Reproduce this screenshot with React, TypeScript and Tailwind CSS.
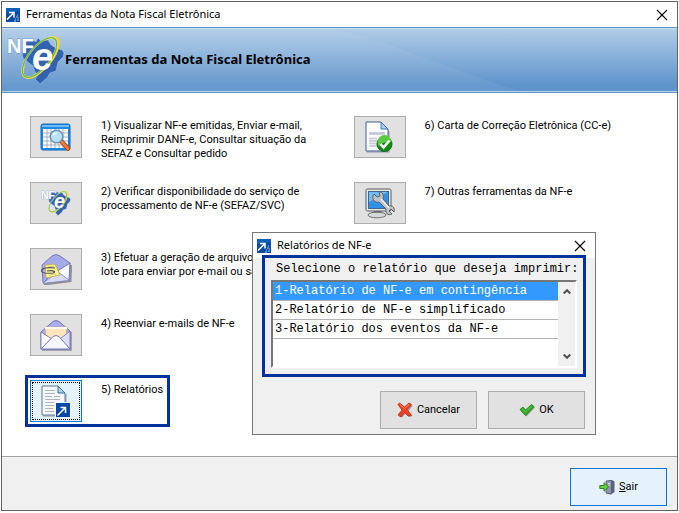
import { useState } from 'react'
import type { ReactNode } from 'react'

const REPORTS = [
  '1-Relatório de NF-e em contingência',
  '2-Relatório de NF-e simplificado',
  '3-Relatório dos eventos da NF-e',
]

function AppIcon() {
  return (
    <svg className="w-3.5 h-3.5 shrink-0" viewBox="0 0 14 14" aria-hidden="true">
      <rect width="14" height="14" fill="#0b4da2" />
      <path d="M0 0H14V3L0 5Z" fill="#0f5fb8" />
      <path d="M1 11.5L7 5.5M3 4.5H8V9.5" stroke="#fff" strokeWidth="1.5" fill="none" />
      <path d="M9 11h1M10 9h2M11 7h1M11 12h2M8 13h2M12 10h1" stroke="#a9c9ec" strokeWidth="1.2" />
    </svg>
  )
}

function CloseIcon() {
  return (
    <svg className="w-3 h-3" viewBox="0 0 12 12" aria-hidden="true">
      <path d="M1 1L11 11M11 1L1 11" stroke="#000" strokeWidth="1.1" fill="none" />
    </svg>
  )
}

function NfeLogo({ className }: { className: string }) {
  return (
    <svg className={className} viewBox="0 0 58 50" aria-hidden="true">
      <path
        d="M18 6L24 4L29 7L31 3L34 6L41 5L44 10L49 13L55 15L57 18L56 22L51 27L49 36L43 38L40 43L33 49L28 44L31 40L28 37L26 31L22 28L16 23L15 17L19 14Z"
        fill="#3363b0"
        stroke="#a5c6e8"
        strokeOpacity=".5"
        strokeWidth="1"
        strokeLinejoin="round"
      />
      <text
        x="0"
        y="18"
        fontFamily="Liberation Sans, sans-serif"
        fontWeight="700"
        fontSize="20"
        fill="#fff"
        stroke="#6f9bd0"
        strokeWidth="1"
        paintOrder="stroke"
      >
        NF
      </text>
      <g fill="none">
        <path d="M41 3C48 1 53 3 52 9C51 15 47 23 42 29" stroke="#f5d626" strokeWidth="2" />
        <path d="M17 31C14 38 16 43 21 43C26 43 32 39 37 34" stroke="#f5d626" strokeWidth="2" />
        <ellipse cx="32.5" cy="22.5" rx="10.5" ry="24" transform="rotate(39 32.5 22.5)" stroke="#eef7e0" strokeOpacity=".7" strokeWidth="2.2" />
        <ellipse cx="32.5" cy="22.5" rx="10.5" ry="24" transform="rotate(39 32.5 22.5)" stroke="#78b82f" strokeWidth="1.4" />
      </g>
      <text x="25" y="35" fontFamily="Liberation Sans, sans-serif" fontStyle="italic" fontWeight="700" fontSize="38" fill="#fff">
        e
      </text>
    </svg>
  )
}

function TableSearchIcon() {
  return (
    <svg className="w-8 h-7" viewBox="0 0 32 28" aria-hidden="true">
      <rect x="1" y="1" width="29" height="26" rx="2" fill="#1d8be6" stroke="#1168bd" />
      <rect x="2" y="2" width="27" height="2" fill="#6fbcf7" />
      <rect x="3" y="6" width="25" height="19" fill="#fff" />
      <path d="M7 6V25M11 6V25M15 6V25M19 6V25M23 6V25M3 10H28M3 14H28M3 18H28M3 22H28" stroke="#a4adbf" />
      <path d="M22 19L28 25.5" stroke="#a13c12" strokeWidth="4.5" strokeLinecap="round" />
      <path d="M22 19L28 25.5" stroke="#f47a3a" strokeWidth="3" strokeLinecap="round" />
      <circle cx="16.5" cy="13.5" r="6.3" fill="#b5e2f8" stroke="#6f93b2" strokeWidth="1.5" />
      <path d="M12.5 13C13 10 15 9 18 9.5C16 11 14 12 12.5 13Z" fill="#fff" />
    </svg>
  )
}

function EnvelopeIcon({ note }: { note?: boolean }) {
  return (
    <svg className="w-8 h-8" viewBox="0 0 32 32" aria-hidden="true">
      {note ? (
        <>
          <path d="M4 31.5L30.5 28L31 12" fill="none" stroke="#8f8f99" strokeWidth="2" />
          <path d="M2 12L12 3Q16 0 20 3L30 10L29 27L3 30Z" fill="#a6aaea" stroke="#7679b8" />
          <path d="M30 10L29 27L3 30L9 24L19 17Z" fill="#f8f8ff" stroke="#7679b8" />
          <path d="M3 30L18 19L29 27" fill="#d8daf8" stroke="#7679b8" strokeWidth=".8" />
          <path d="M5 12L15 11L20 22L6 25Z" fill="#fbf590" stroke="#b5aa4d" strokeWidth=".8" />
          <path d="M8 14L14 13M9 22L16 21" stroke="#d6cf70" />
          <path d="M15 15C8 14 1.5 15 1.5 18C2 20.500 8 20.500 13 20C16 19 15 17 7 18" fill="none" stroke="#505059" strokeWidth="1.2" />
        </>
      ) : (
        <>
          <path d="M2 31H31V13" fill="none" stroke="#8f8f99" strokeWidth="1.5" />
          <path d="M1 13L13 2.5Q16 .5 19 2.5L30 12V30H1Z" fill="#a9adeb" stroke="#7578b7" />
          <path d="M5 8L27 8L26 20L16 23L6 19Z" fill="#ffe5bd" stroke="#c7a98a" strokeWidth=".7" />
          <path d="M5 8H27V10H5Z" fill="#fffaf0" />
          <path d="M1 13L12 20L1 30Z" fill="#fbfbff" stroke="#7578b7" strokeWidth=".9" />
          <path d="M30 12L20 20L30 30Z" fill="#dcdef9" stroke="#7578b7" strokeWidth=".9" />
          <path d="M1 30L13 17.5Q16 15.5 19 17.5L30 30Z" fill="#f7f7ff" stroke="#7578b7" />
        </>
      )}
    </svg>
  )
}

function ReportIcon() {
  return (
    <svg className="w-8 h-8" viewBox="0 0 32 32" aria-hidden="true">
      <path d="M3 31H26V9" fill="none" stroke="#b8c3cc" strokeWidth="2" />
      <path d="M2 1H18L25 8V30H2Z" fill="#f5f7f8" stroke="#5c7695" />
      <path d="M18 1V8H25Z" fill="#a9d2f3" stroke="#3f6e9f" />
      <path d="M5 5.5h10M5 8.5h10M5 11.5h7M14 11.5h6M5 14.5h15M5 17.5h9M5 20.5h9M5 23.5h8M5 26.5h9" stroke="#b1b4b6" />
      <rect x="15" y="17" width="16" height="15" fill="#fff" />
      <rect x="16" y="18" width="14" height="14" fill="#0747a6" />
      <path d="M17.5 30.5L25 23M20.5 22.5H25.5V28" stroke="#fff" strokeWidth="1.5" fill="none" />
    </svg>
  )
}

function CheckedPageIcon() {
  return (
    <svg className="w-8 h-8" viewBox="0 0 32 32" aria-hidden="true">
      <path d="M3 31H25V10" fill="none" stroke="#a9adb6" strokeWidth="1.5" />
      <path d="M2 1H17L24 8V30H2Z" fill="#fdfdff" stroke="#405f91" />
      <path d="M17 1V8H24Z" fill="#a6cdf2" stroke="#3e77b9" />
      <rect x="5" y="11" width="16" height="3" fill="#c8cbdc" />
      <path d="M5 17.5H13M5 20H13M5 22.5H13M5 25H13" stroke="#cfd1df" strokeWidth="1.8" />
      <circle cx="20.5" cy="23" r="7.5" fill="#138b13" stroke="#0b6f0b" />
      <path d="M13.5 21A7 7 0 0 1 27.5 21Q21 20 14 25Z" fill="#5cca45" />
      <path d="M16.5 23L19.5 26.5L25.5 19.5" fill="none" stroke="#fff" strokeWidth="2.6" />
    </svg>
  )
}

function MonitorToolsIcon() {
  return (
    <svg className="w-8 h-8" viewBox="0 0 32 32" aria-hidden="true">
      <path d="M10 24H17L19 28H7Z" fill="#777e84" />
      <ellipse cx="13" cy="28" rx="9" ry="2.8" fill="#d5d8da" stroke="#666" strokeWidth=".9" />
      <rect x="2" y="2" width="25" height="22" rx="1.5" fill="#e6e8ea" stroke="#565d64" />
      <rect x="4.5" y="4.5" width="20" height="17" fill="#2f91e8" stroke="#456688" />
      <path d="M5 5H24L5 15Z" fill="#72bdf7" />
      <path
        d="M10 7L13 10L16 9L15 5C19 5 20 8 19 12L25 19C29 18 31 21 30 25L27 22L25 24L28 27C24 29 21 26 22 22L15 15C11 16 8 13 9 9Z"
        fill="#c0c3c6"
        stroke="#5c6064"
        strokeWidth="1"
      />
      <path d="M17 12L25 21" stroke="#f4f4f4" strokeWidth="1.3" />
    </svg>
  )
}

function CancelIcon() {
  return (
    <svg className="w-4 h-4" viewBox="0 0 16 16" aria-hidden="true">
      <path d="M4 2L9 6L13 2L15.5 4L11.5 9L15.5 14L12 15L8.5 11.5L5 15.5L2 14L6 9L2 4Z" fill="#999" />
      <path
        d="M2.5 1L7.5 5L12 1L14.5 2.5L10 7.5L14.5 13.5L11 14L7.5 10.5L4 15L1 13L5 8L1 2.5Z"
        fill="#f1401f"
        stroke="#b92c14"
        strokeWidth=".8"
        strokeLinejoin="round"
      />
      <path d="M3 2.5L7.5 6.5L12 2.5" fill="none" stroke="#ff9270" />
    </svg>
  )
}

function OkIcon() {
  return (
    <svg className="w-4 h-4" viewBox="0 0 16 16" aria-hidden="true">
      <path d="M2 9L5 7L7.5 10L13.5 4L16 5.5L7.5 14.5Z" fill="#999" />
      <path
        d="M1 7.5L4 5L6.5 8L12.5 2.5L15 4.5L6.5 13.5Z"
        fill="#35ad2b"
        stroke="#1b7d16"
        strokeWidth=".8"
        strokeLinejoin="round"
      />
      <path d="M3 7L6.5 10L12.5 4" fill="none" stroke="#66c957" strokeWidth=".8" />
    </svg>
  )
}

function ExitIcon() {
  return (
    <svg className="w-4 h-4" viewBox="0 0 16 16" aria-hidden="true">
      <path d="M7 2L13 1L15.5 2.5V13L12 15.5L7 14Z" fill="#5d5f7d" />
      <path d="M7 2L12.5 1.5V15L7 14Z" fill="#9194b4" stroke="#55576f" strokeWidth=".8" />
      <path d="M9 4.5H11M9 6H11" stroke="#d8daea" strokeWidth=".9" />
      <path d="M.8 6.5H5V3.8L9.5 8L5 12.2V9.5H.8Z" fill="#5fd23f" stroke="#237d16" strokeWidth=".9" />
    </svg>
  )
}

type ToolProps = { icon: ReactNode; text: string; active?: boolean }

function Tool({ icon, text, active }: ToolProps) {
  return (
    <label className={`flex items-start h-[42px] gap-[19px] ${active ? 'w-fit pr-0.5 outline-3 outline-offset-2 outline-[#003399]' : ''}`}>
      <button
        className={`flex items-center justify-center w-[52px] h-[42px] shrink-0 border ${
          active ? 'bg-[#e5f1fb] border-[#0078d7] p-px' : 'bg-[#e1e1e1] border-[#adadad]'
        }`}
      >
        {active ? (
          <span className="flex items-center justify-center w-full h-full border border-dotted border-black">{icon}</span>
        ) : (
          icon
        )}
      </button>
      <span className="pt-[3px] whitespace-pre leading-[14px]">{text}</span>
    </label>
  )
}

function TitleBar({ title }: { title: string }) {
  return (
    <div className="flex items-center h-[25px] shrink-0 bg-white pl-1 pr-[9px] gap-1.5 font-['Noto_Sans',sans-serif] text-[11px]">
      <AppIcon />
      <span className="flex-1 whitespace-nowrap">{title}</span>
      <button aria-label="Fechar">
        <CloseIcon />
      </button>
    </div>
  )
}

function ReportDialog() {
  const [selected, setSelected] = useState(0)

  return (
    <section className="absolute left-[252px] top-[232px] w-[344px] border border-[#777] bg-[#f0f0f0]">
      <TitleBar title="Relatórios de NF-e" />
      <div className="relative -mt-[3px] mx-[9px] border-3 border-[#003399] bg-[#f0f0f0] px-1.5 pb-1.5 font-['Liberation_Mono',monospace] text-[12px]">
        <p className="h-[22px] leading-[22px] pl-[5px] whitespace-nowrap">Selecione o relatório que deseja imprimir:</p>
        <div className="flex h-[88px] bg-white border-2 border-t-[#777] border-l-[#777] border-r-white border-b-white">
          <ul className="flex-1">
            {REPORTS.map((report, i) => (
              <li key={report} className="border-b border-[#b4b4b4]">
                <button
                  onClick={() => setSelected(i)}
                  className={`block w-full h-[18px] leading-[18px] pl-0.5 text-left whitespace-nowrap ${
                    selected === i ? 'bg-[#3399ff] text-white' : ''
                  }`}
                >
                  {report}
                </button>
              </li>
            ))}
          </ul>
          <div className="flex flex-col items-center justify-between w-[17px] py-1.5 bg-[#f0f0f0]">
            <svg className="w-2 h-2" viewBox="0 0 8 8" aria-hidden="true">
              <path d="M.7 5.5L4 2.2L7.3 5.5" fill="none" stroke="#505050" strokeWidth="2" />
            </svg>
            <svg className="w-2 h-2" viewBox="0 0 8 8" aria-hidden="true">
              <path d="M.7 2.5L4 5.8L7.3 2.5" fill="none" stroke="#505050" strokeWidth="2" />
            </svg>
          </div>
        </div>
      </div>
      <div className="flex justify-end gap-[11px] pt-3.5 pb-[5px] pr-2.5">
        <button className="flex items-center justify-center gap-1 w-[97px] h-[38px] border border-[#adadad] bg-[#e1e1e1]">
          <CancelIcon />
          Cancelar
        </button>
        <button className="flex items-center justify-center gap-1 w-[97px] h-[38px] border border-[#adadad] bg-[#e1e1e1]">
          <OkIcon />
          OK
        </button>
      </div>
    </section>
  )
}

export default function App() {
  return (
    <div className="relative flex min-h-screen p-px pb-0.5 bg-white text-black font-['Roboto',sans-serif] text-[11px]">
      <main className="flex flex-col flex-1 border border-[#646464] bg-white">
        <TitleBar title="Ferramentas da Nota Fiscal Eletrônica" />

        <header className="relative flex items-center h-[66px] border-y border-[#5b8fc8] bg-linear-to-b from-[#b2cde7] to-[#5e93cb] to-90%">
          <svg className="absolute inset-0 w-full h-full" viewBox="0 0 675 64" preserveAspectRatio="none" aria-hidden="true">
            <path d="M0 0H330C400 18 460 46 520 64H0Z" fill="#fff" fillOpacity=".06" />
            <path d="M0 .5H675M0 63.5H675" stroke="#d3e3f4" strokeOpacity=".8" />
          </svg>
          <div className="relative flex items-center pl-[5px]">
            <NfeLogo className="w-[58px] h-[50px]" />
            <h1 className="font-['Noto_Sans',sans-serif] font-bold text-[13px]">Ferramentas da Nota Fiscal Eletrônica</h1>
          </div>
        </header>

        <div className="grid flex-1 content-start grid-cols-2 grid-rows-[repeat(5,42px)] grid-flow-col gap-y-6 pl-7 pt-[23px]">
          <Tool
            icon={<TableSearchIcon />}
            text={'1) Visualizar NF-e emitidas, Enviar e-mail,\nReimprimir DANF-e, Consultar situação da\nSEFAZ e Consultar pedido'}
          />
          <Tool
            icon={<NfeLogo className="w-[30px] h-[26px]" />}
            text={'2) Verificar disponibilidade do serviço de\nprocessamento de NF-e (SEFAZ/SVC)'}
          />
          <Tool
            icon={<EnvelopeIcon note />}
            text={'3) Efetuar a geração de arquivos em\nlote para enviar por e-mail ou salvar'}
          />
          <Tool icon={<EnvelopeIcon />} text="4) Reenviar e-mails de NF-e" />
          <Tool icon={<ReportIcon />} text="5) Relatórios" active />
          <Tool icon={<CheckedPageIcon />} text="6) Carta de Correção Eletrônica (CC-e)" />
          <Tool icon={<MonitorToolsIcon />} text="7) Outras ferramentas da NF-e" />
        </div>

        <footer className="flex items-center justify-end h-[54px] pr-2.5 pt-[7px] border-t border-[#a0a0a0] bg-[#f0f0f0]">
          <button className="flex items-center justify-center gap-1 w-[97px] h-[38px] border border-[#0078d7] bg-[#e5f1fb]">
            <ExitIcon />
            <span>
              <u>S</u>air
            </span>
          </button>
        </footer>
      </main>

      <ReportDialog />
    </div>
  )
}
